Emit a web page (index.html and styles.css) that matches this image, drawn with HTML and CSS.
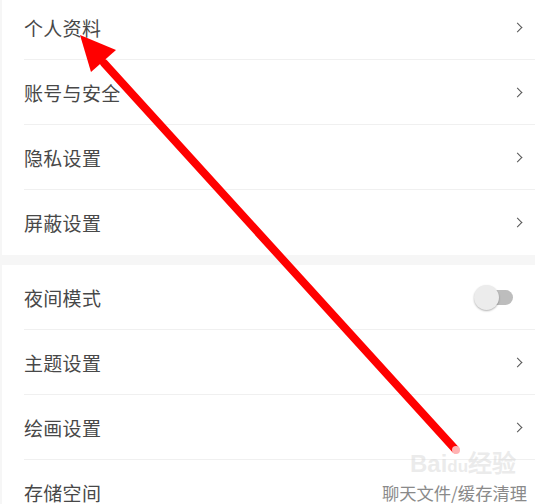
FILE: index.html
```html
<!DOCTYPE html>
<html lang="zh-CN">
<head>
    <meta charset="UTF-8">
    <meta name="viewport" content="width=device-width, initial-scale=1.0">
    <title>设置</title>
    <link rel="stylesheet" href="styles.css">
</head>
<body>
    <div class="screen">
        <div class="group first">
            <div class="row"><span class="label">个人资料</span><span class="chev"></span></div>
            <div class="row"><span class="label">账号与安全</span><span class="chev"></span></div>
            <div class="row"><span class="label">隐私设置</span><span class="chev"></span></div>
            <div class="row last"><span class="label">屏蔽设置</span><span class="chev"></span></div>
        </div>
        <div class="group">
            <div class="row"><span class="label">夜间模式</span><span class="toggle"><span class="thumb"></span></span></div>
            <div class="row"><span class="label">主题设置</span><span class="chev"></span></div>
            <div class="row"><span class="label">绘画设置</span><span class="chev"></span></div>
            <div class="row last"><span class="label">存储空间</span><span class="value">聊天文件/缓存清理</span></div>
        </div>

        <div class="watermark">Bai<span class="paw">du</span>经验</div>

        <svg class="arrow" width="535" height="504" viewBox="0 0 535 504">
            <line x1="455" y1="449" x2="104" y2="63" stroke="#ff0000" stroke-width="8" stroke-linecap="round"/>
            <polygon points="80,35 91,72 116,50" fill="#ff0000"/>
            <circle cx="456" cy="450" r="4" fill="#ffb3b3"/>
        </svg>
    </div>
</body>
</html>
```

FILE: styles.css
```css
body {
    margin: 0;
    padding: 0;
    background-color: #f6f6f6;
    font-family: "Noto Sans CJK SC", "Noto Sans", sans-serif;
    color: #484848;
}
.screen {
    position: relative;
    width: 535px;
    height: 504px;
    overflow: hidden;
    background-color: #f6f6f6;
}
.group {
    background-color: #fff;
    margin-left: 2px;
    padding-left: 22px;
    margin-bottom: 10px;
}
.group.first {
    margin-top: -5px;
}
.row {
    display: flex;
    align-items: center;
    justify-content: space-between;
    height: 64px;
    border-bottom: 1px solid #f0f0f0;
    padding-right: 12px;
}
.row.last {
    border-bottom: none;
    height: 65px;
}
.label {
    font-size: 19px;
    letter-spacing: 0.3px;
}
.chev {
    width: 6px;
    height: 6px;
    border-top: 1.5px solid #555;
    border-right: 1.5px solid #555;
    transform: rotate(45deg);
    margin-right: 2px;
}
.value {
    font-size: 17.3px;
    color: #8a8a8a;
    margin-right: -4px;
}
.toggle {
    position: relative;
    width: 26px;
    height: 15px;
    background-color: #bdbdbd;
    border-radius: 8px;
    margin-right: 10px;
}
.thumb {
    position: absolute;
    left: -13px;
    top: -5px;
    width: 25px;
    height: 25px;
    border-radius: 50%;
    background-color: #ececec;
    box-shadow: 0 1px 2px rgba(0, 0, 0, 0.3);
}
.watermark {
    position: absolute;
    left: 410px;
    top: 452px;
    font-family: "Liberation Sans", sans-serif;
    font-size: 24px;
    font-weight: bold;
    color: rgba(215, 215, 215, 0.5);
    line-height: 1;
}
.watermark .paw {
    font-size: 17px;
}
.arrow {
    position: absolute;
    left: 0;
    top: 0;
}
```
